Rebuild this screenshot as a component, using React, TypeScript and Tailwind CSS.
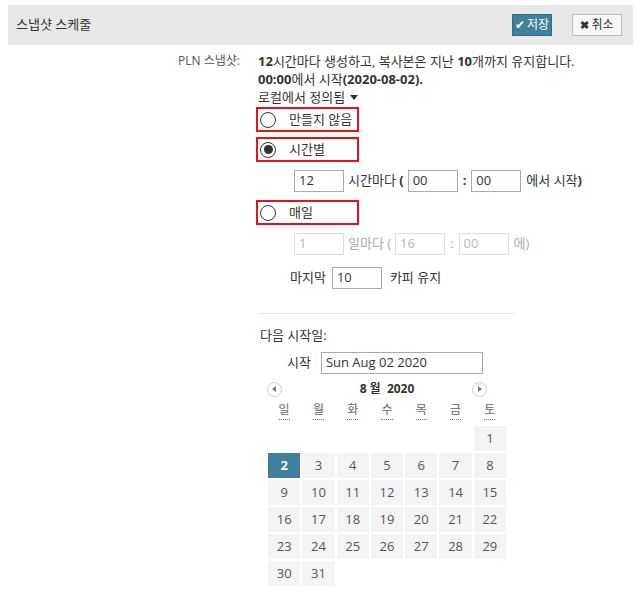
import React from 'react';

const font = { fontFamily: '"Open Sans", "Noto Sans CJK KR", sans-serif' };

const Radio = ({ label, checked }: { label: string; checked?: boolean }) => (
  <div className="ml-[-2px] flex h-[25px] w-[103px] items-center border-2 border-[#ee1111] pl-[2px]">
    <span className="flex h-[16px] w-[16px] items-center justify-center rounded-full border border-[#333] bg-white">
      {checked && <span className="h-[9px] w-[9px] rounded-full bg-[#333]" />}
    </span>
    <span className="ml-[13px] text-[13px] text-[#333]">{label}</span>
  </div>
);

const Field = ({ value, disabled, w = 'w-[50px]' }: { value: string; disabled?: boolean; w?: string }) => (
  <div
    className={`flex h-[22px] ${w} items-center border px-[4px] text-[13px] ${
      disabled ? 'border-[#dcdcdc] text-[#b8b8b8]' : 'border-[#aaa] text-[#333]'
    }`}
  >
    {value}
  </div>
);

const days = ['일', '월', '화', '수', '목', '금', '토'];

export default function App() {
  // August 2020 starts on a Saturday
  const cells: (number | null)[] = [null, null, null, null, null, null];
  for (let d = 1; d <= 31; d++) cells.push(d);

  return (
    <div className="h-[598px] w-[644px] overflow-hidden bg-white" style={font}>
      {/* Header */}
      <div className="mx-[8px] mt-[5px] flex h-[40px] w-[625px] items-center justify-between bg-[#e8e8e8] pl-[8px] pr-[11px]">
        <span className="text-[13px] text-[#333]">스냅샷 스케줄</span>
        <div className="flex items-center gap-[20px]">
          <button className="flex h-[22px] w-[40px] items-center justify-center gap-[2px] border border-[#336b83] bg-[#3f819c] text-[12px] text-white">
            <span className="text-[12px]">✔</span>저장
          </button>
          <button className="flex h-[22px] w-[50px] items-center justify-center gap-[2px] border border-[#bbb] bg-[#f7f7f7] text-[12px] text-[#333]">
            <span className="text-[11px] font-bold">✖</span>취소
          </button>
        </div>
      </div>

      {/* Body */}
      <div className="flex pt-[7px]">
        <div className="w-[240px] text-right text-[12px] leading-[18px] text-[#555]">PLN 스냅샷:</div>
        <div className="ml-[18px] flex flex-col text-[13px] text-[#333]">
          <div className="leading-[18px]">
            <b>12</b>시간마다 생성하고, 복사본은 지난 <b>10</b>개까지 유지합니다.
          </div>
          <div className="leading-[18px]">
            <b>00:00</b>에서 시작<b>(2020-08-02).</b>
          </div>
          <div className="flex items-center leading-[18px]">
            로컬에서 정의됨
            <span className="ml-[5px] h-0 w-0 border-x-[4px] border-t-[5px] border-x-transparent border-t-[#333]" />
          </div>

          <div className="mt-[1px]">
            <Radio label="만들지 않음" />
          </div>
          <div className="mt-[5px]">
            <Radio label="시간별" checked />
          </div>

          <div className="ml-[36px] mt-[8px] flex items-center gap-[4px]">
            <Field value="12" />
            <span>
              시간마다 <b>(</b>
            </span>
            <Field value="00" />
            <b className="mx-[1px]">:</b>
            <Field value="00" />
            <span className="ml-[1px]">
              에서 시작<b>)</b>
            </span>
          </div>

          <div className="mt-[8px]">
            <Radio label="매일" />
          </div>

          <div className="ml-[36px] mt-[8px] flex items-center gap-[4px] text-[#aaa]">
            <Field value="1" disabled />
            <span>일마다 (</span>
            <Field value="16" disabled />
            <span className="mx-[1px]">:</span>
            <Field value="00" disabled />
            <span className="ml-[1px]">에)</span>
          </div>

          <div className="ml-[32px] mt-[12px] flex items-center gap-[6px]">
            <span>마지막</span>
            <Field value="10" />
            <span className="ml-[2px]">카피 유지</span>
          </div>

          <div className="mt-[24px] h-px w-[256px] bg-[#e6e6e6]" />

          <div className="ml-[2px] mt-[12px] leading-[18px]">다음 시작일:</div>

          <div className="ml-[29px] mt-[8px] flex items-center gap-[10px]">
            <span>시작</span>
            <div className="flex h-[22px] w-[162px] items-center border border-[#aaa] px-[4px] text-[13px] text-[#333]">
              Sun Aug 02 2020
            </div>
          </div>

          {/* Calendar */}
          <div className="ml-[10px] w-[238px]">
            <div className="mt-[6px] grid h-[16px] grid-cols-[1fr_auto_1fr] items-center">
              <span className="ml-[-1px] flex h-[15px] w-[15px] items-center justify-center rounded-full border border-[#ccc]">
                <span className="mr-[1px] h-0 w-0 border-y-[3px] border-r-[4px] border-y-transparent border-r-[#777]" />
              </span>
              <span className="text-[12px] font-bold text-[#333]">8 월&nbsp; 2020</span>
              <span className="mr-[19px] flex h-[15px] w-[15px] items-center justify-center justify-self-end rounded-full border border-[#ccc]">
                <span className="ml-[1px] h-0 w-0 border-y-[3px] border-l-[4px] border-y-transparent border-l-[#777]" />
              </span>
            </div>

            <div className="mt-[6px] grid h-[18px] grid-cols-7 gap-[2px]">
              {days.map((d) => (
                <div key={d} className="flex justify-center">
                  <span className="border-b border-dotted border-[#777] text-[12px] leading-[15px] text-[#666]">{d}</span>
                </div>
              ))}
            </div>

            <div className="mt-[6px] grid grid-cols-7 gap-[2px]">
              {cells.map((d, i) =>
                d === null ? (
                  <div key={i} className="h-[25px]" />
                ) : d === 2 ? (
                  <div key={i} className="flex h-[25px] items-center justify-center bg-[#3f819c] text-[13px] font-bold text-white">
                    {d}
                  </div>
                ) : (
                  <div key={i} className="flex h-[25px] items-center justify-center bg-[#f4f4f4] text-[13px] text-[#555]">
                    {d}
                  </div>
                )
              )}
            </div>
          </div>
        </div>
      </div>
    </div>
  );
}
